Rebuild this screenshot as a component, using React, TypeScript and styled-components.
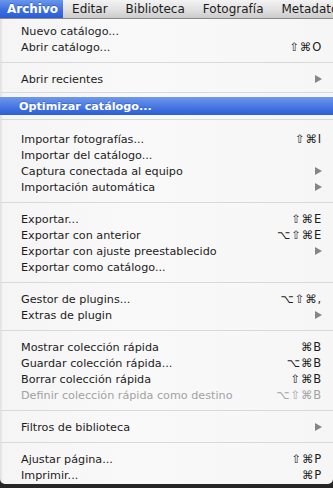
import React from 'react';
import styled, { createGlobalStyle, css } from 'styled-components';

type Entry =
  | { kind: 'sep'; top?: number; bottom?: number }
  | { kind: 'item'; label: string; keys?: string; sub?: boolean; active?: boolean; disabled?: boolean };

const menuTitles = ['Archivo', 'Editar', 'Biblioteca', 'Fotografía', 'Metadatos'];

const entries: Entry[] = [
  { kind: 'item', label: 'Nuevo catálogo...' },
  { kind: 'item', label: 'Abrir catálogo...', keys: '⇧⌘O' },
  { kind: 'sep' },
  { kind: 'item', label: 'Abrir recientes', sub: true },
  { kind: 'sep', top: 5, bottom: 4 },
  { kind: 'item', label: 'Optimizar catálogo...', active: true },
  { kind: 'sep', top: 4, bottom: 11 },
  { kind: 'item', label: 'Importar fotografías...', keys: '⇧⌘I' },
  { kind: 'item', label: 'Importar del catálogo...' },
  { kind: 'item', label: 'Captura conectada al equipo', sub: true },
  { kind: 'item', label: 'Importación automática', sub: true },
  { kind: 'sep' },
  { kind: 'item', label: 'Exportar...', keys: '⇧⌘E' },
  { kind: 'item', label: 'Exportar con anterior', keys: '⌥⇧⌘E' },
  { kind: 'item', label: 'Exportar con ajuste preestablecido', sub: true },
  { kind: 'item', label: 'Exportar como catálogo...' },
  { kind: 'sep' },
  { kind: 'item', label: 'Gestor de plugins...', keys: '⌥⇧⌘,' },
  { kind: 'item', label: 'Extras de plugin', sub: true },
  { kind: 'sep' },
  { kind: 'item', label: 'Mostrar colección rápida', keys: '⌘B' },
  { kind: 'item', label: 'Guardar colección rápida...', keys: '⌥⌘B' },
  { kind: 'item', label: 'Borrar colección rápida', keys: '⇧⌘B' },
  { kind: 'item', label: 'Definir colección rápida como destino', keys: '⌥⇧⌘B', disabled: true },
  { kind: 'sep' },
  { kind: 'item', label: 'Filtros de biblioteca', sub: true },
  { kind: 'sep' },
  { kind: 'item', label: 'Ajustar página...', keys: '⇧⌘P' },
  { kind: 'item', label: 'Imprimir...', keys: '⌘P' },
];

const App = () => {
  return (
    <>
      <GlobalStyle />
      <Screen>
        <MenuBar>
          {menuTitles.map((title, i) => (
            <MenuTitle key={title} $open={i === 0}>
              {title}
            </MenuTitle>
          ))}
        </MenuBar>
        <Menu>
          {entries.map((entry, i) =>
            entry.kind === 'sep' ? (
              <Separator key={i} $top={entry.top} $bottom={entry.bottom} />
            ) : (
              <Item key={i} $active={entry.active} $disabled={entry.disabled}>
                <span>{entry.label}</span>
                {entry.keys && <Keys>{entry.keys}</Keys>}
                {entry.sub && <SubArrow $active={entry.active} />}
              </Item>
            )
          )}
        </Menu>
      </Screen>
    </>
  );
};

const GlobalStyle = createGlobalStyle`
  html, body {
    margin: 0;
    padding: 0;
    background: #262626;
  }
  body {
    font-family: "DejaVu Sans", "Liberation Sans", sans-serif;
    -webkit-font-smoothing: antialiased;
  }
`;

const Screen = styled.div`
  width: 333px;
  height: 488px;
  overflow: hidden;
  display: flex;
  flex-direction: column;
  padding-bottom: 4px;
  box-sizing: border-box;
  background: #262626;
`;

const MenuBar = styled.div`
  height: 18px;
  flex: none;
  display: flex;
  align-items: stretch;
  white-space: nowrap;
  overflow: hidden;
  background: linear-gradient(#f3f3f3, #e2e2e2 50%, #cbcbcb);
  border-bottom: 1px solid #8a8a8a;
`;

const MenuTitle = styled.div<{ $open?: boolean }>`
  display: flex;
  align-items: center;
  padding: 0 9px;
  font-size: 12px;
  color: #1c1c1c;
  ${({ $open }) =>
    $open &&
    css`
      padding: 0 5px 0 7px;
      font-weight: bold;
      color: #fff;
      background: linear-gradient(#6a96ec, #3e6fe0 55%, #2a5cd6);
      text-shadow: 0 -1px 0 rgba(0, 0, 0, 0.25);
    `}
`;

const Menu = styled.div`
  flex: 1;
  display: flex;
  flex-direction: column;
  padding-top: 4px;
  border-radius: 0 0 5px 5px;
  background: linear-gradient(90deg, #dedede 0, #f5f5f5 3px, #f9f9f9 40%, #f6f6f6);
`;

const Item = styled.div<{ $active?: boolean; $disabled?: boolean }>`
  height: 16px;
  flex: none;
  display: flex;
  align-items: center;
  justify-content: space-between;
  padding: 0 11px 0 21px;
  font-size: 11.2px;
  color: ${({ $disabled }) => ($disabled ? '#a2a2a2' : '#1c1c1c')};
  white-space: nowrap;
  ${({ $active }) =>
    $active &&
    css`
      height: 18px;
      padding-left: 19px;
      font-weight: bold;
      color: #fff;
      background: linear-gradient(#6f98eb, #4a7ae3 50%, #2b5ed8);
      text-shadow: 0 -1px 0 rgba(0, 0, 0, 0.2);
    `}
`;

const Keys = styled.span`
  font-family: "DejaVu Sans", sans-serif;
  font-size: 11.5px;
  letter-spacing: 0.8px;
`;

const SubArrow = styled.span<{ $active?: boolean }>`
  width: 0;
  height: 0;
  border-top: 4.5px solid transparent;
  border-bottom: 4.5px solid transparent;
  border-left: 7px solid ${({ $active }) => ($active ? '#fff' : '#858585')};
`;

const Separator = styled.div<{ $top?: number; $bottom?: number }>`
  flex: none;
  padding: ${({ $top = 7, $bottom = 8 }) => `${$top}px 0 ${$bottom}px 1px`};
  &::after {
    content: '';
    display: block;
    height: 1px;
    background: #d9d9d9;
  }
`;

export default App;
